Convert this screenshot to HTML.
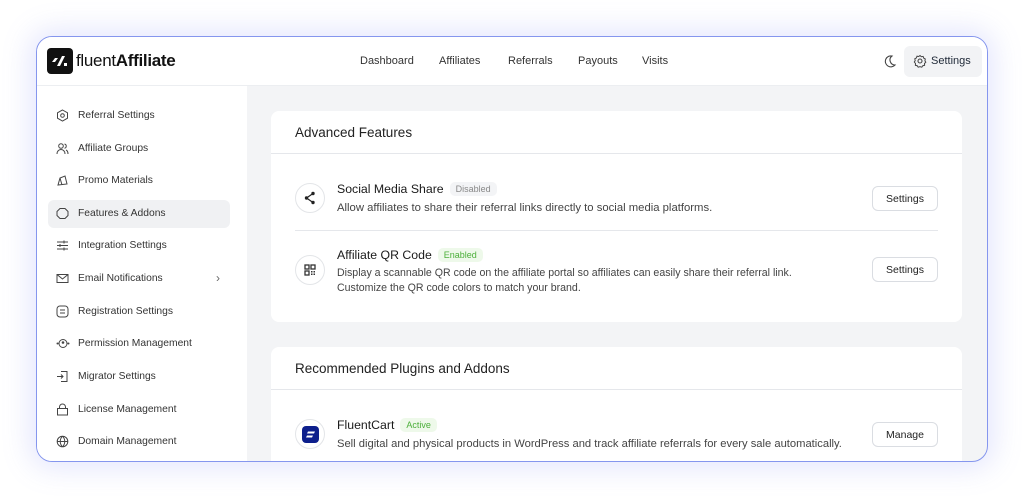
<!DOCTYPE html>
<html><head><meta charset="utf-8"><style>
*{box-sizing:border-box;margin:0;padding:0}
body{width:1024px;height:499px;background:#fff;font-family:"Liberation Sans",sans-serif;color:#1f2937;position:relative;overflow:hidden}
.frame{position:absolute;left:36px;top:36px;width:952px;height:426px;border:1.5px solid #8596ee;border-radius:16px;background:#f3f4f6;overflow:hidden;box-shadow:0 0 28px 6px rgba(130,140,245,.22)}
.hdr{position:absolute;left:0;top:0;width:100%;height:49px;background:#fff;border-bottom:1px solid #eceef1}
.logo{position:absolute;left:10px;top:11px;width:26px;height:26px;background:#111;border-radius:4px}
.brand{position:absolute;left:39px;top:14px;font-size:17px;color:#111;letter-spacing:-.3px}
.nav{position:absolute;top:18px;font-size:11px;color:#333}
.setb{position:absolute;left:867px;top:9px;width:78px;height:31px;background:#f2f3f5;border-radius:6px;font-size:11px;padding:9px 0 0 27px}
.side{position:absolute;left:0;top:49px;width:210px;height:380px;background:#fff}
.si{position:absolute;left:11px;width:182px;height:28px;border-radius:6px;font-size:10.3px;color:#333;padding:8px 0 0 30px}
.si svg{position:absolute;left:8px;top:7px}
.act{background:#f0f1f3}
.card{position:absolute;left:234px;width:691px;background:#fff;border-radius:8px}
.ct{height:43px;border-bottom:1px solid #e5e7eb;font-size:13.5px;padding:14px 0 0 24px;color:#222}
.row{position:absolute;left:24px;width:643px}
.ic{position:absolute;left:0;width:30px;height:30px;border-radius:50%;border:1px solid #e3e5e8;background:#fff}
.ti{position:absolute;left:42px;font-size:12.3px;color:#1a1a1a}
.badge{display:inline-block;font-size:9px;padding:2px 6px;border-radius:5px;margin-left:6px;vertical-align:1px}
.ds{position:absolute;left:42px;font-size:10.8px;color:#444;line-height:15px;white-space:nowrap}
.btn{position:absolute;right:0;width:66px;height:25px;border:1px solid #dadde2;border-radius:6px;font-size:10.5px;text-align:center;padding-top:6px;color:#222;background:#fff}
</style></head><body>
<div class="frame">
<div class="hdr">
 <div class="logo"><svg width="26" height="26"><path d="M8 10l3 0-3 4h-3z M15 8h3l-5 10h-3z M17 15h3v3h-3z" fill="#fff"/></svg></div>
 <div class="brand">fluent<b style="font-weight:600">Affiliate</b></div>
 <div class="nav" style="left:323px">Dashboard</div>
 <div class="nav" style="left:402px">Affiliates</div>
 <div class="nav" style="left:471px">Referrals</div>
 <div class="nav" style="left:541px">Payouts</div>
 <div class="nav" style="left:605px">Visits</div>
 <svg style="position:absolute;left:846px;top:17px" width="14" height="14" viewBox="0 0 14 14"><path d="M9 2a5.5 5.5 0 1 0 3 9A5 5 0 0 1 9 2z" fill="none" stroke="#444" stroke-width="1.1"/></svg>
 <div class="setb"><svg style="position:absolute;left:9px;top:8px" width="14" height="14" viewBox="0 0 14 14"><circle cx="7" cy="7" r="2" fill="none" stroke="#444" stroke-width="1.1"/><path d="M7 1.5l1.3 1.2 1.8-.3.6 1.7 1.6.9-.4 1.8.9 1.4-1.3 1.3.1 1.8-1.8.4-1 1.5-1.8-.6-1.8.6-1-1.5-1.8-.4.1-1.8L1.3 8l.9-1.4-.4-1.8 1.6-.9.6-1.700 1.8.3z" fill="none" stroke="#444" stroke-width="1"/></svg>Settings</div>
</div>
<div class="side">
 <div class="si" style="top:16px"><svg width="13" height="13" viewBox="0 0 13 13"><path d="M6.5 1l5 2.8v5.4l-5 2.8-5-2.8V3.8z" fill="none" stroke="#444"/><circle cx="6.5" cy="6.5" r="1.8" fill="none" stroke="#444"/></svg>Referral Settings</div>
 <div class="si" style="top:49px"><svg width="13" height="13" viewBox="0 0 13 13"><circle cx="5" cy="4" r="2.3" fill="none" stroke="#444"/><path d="M1 12c0-3 2-4.5 4-4.5s4 1.5 4 4.5M8.5 2a2.2 2.2 0 0 1 0 4.3M10 8c1.5.6 2 2 2 4" fill="none" stroke="#444"/></svg>Affiliate Groups</div>
 <div class="si" style="top:81px"><svg width="13" height="13" viewBox="0 0 13 13"><path d="M2 11l2-7 5-2 2 8z M4 4l2 7" fill="none" stroke="#444"/></svg>Promo Materials</div>
 <div class="si act" style="top:114px"><svg width="13" height="13" viewBox="0 0 13 13"><path d="M4 1.5h5l3 3v4l-3 3H4l-3-3v-4z" fill="none" stroke="#444"/></svg>Features &amp; Addons</div>
 <div class="si" style="top:146px"><svg width="13" height="13" viewBox="0 0 13 13"><path d="M1 3h11M1 6.5h11M1 10h11" stroke="#444"/><path d="M8 1.5v3M4 5v3M8 8.5v3" stroke="#444"/></svg>Integration Settings</div>
 <div class="si" style="top:179px"><svg width="13" height="13" viewBox="0 0 13 13"><rect x="1" y="2.5" width="11" height="8" fill="none" stroke="#444"/><path d="M1 2.5l5.5 4.5 5.5-4.5" fill="none" stroke="#444"/></svg>Email Notifications<span style="position:absolute;left:168px;top:6px;color:#666;font-size:12px">›</span></div>
 <div class="si" style="top:212px"><svg width="13" height="13" viewBox="0 0 13 13"><rect x="1" y="1" width="11" height="11" rx="3" fill="none" stroke="#444"/><path d="M4 5h5M4 8h5" stroke="#444"/></svg>Registration Settings</div>
 <div class="si" style="top:244px"><svg width="14" height="13" viewBox="0 0 14 13"><circle cx="7" cy="6.5" r="4" fill="none" stroke="#444"/><circle cx="7" cy="5.5" r="1.3" fill="#444"/><circle cx="1.5" cy="6.5" r="1" fill="#444"/><circle cx="12.5" cy="6.5" r="1" fill="#444"/></svg>Permission Management</div>
 <div class="si" style="top:277px"><svg width="13" height="13" viewBox="0 0 13 13"><path d="M5 1.5h6v10H5M1 6.5h6M5 4.5l2 2-2 2" fill="none" stroke="#444"/></svg>Migrator Settings</div>
 <div class="si" style="top:310px"><svg width="13" height="13" viewBox="0 0 13 13"><rect x="1.5" y="5.5" width="10" height="6.5" fill="none" stroke="#444"/><path d="M3.5 5.5V4a3 3 0 0 1 6 0v1.5" fill="none" stroke="#444"/></svg>License Management</div>
 <div class="si" style="top:342px"><svg width="13" height="13" viewBox="0 0 13 13"><circle cx="6.5" cy="6.5" r="5.3" fill="none" stroke="#444"/><path d="M1.2 6.5h10.6M6.5 1.2c-3 3-3 7.6 0 10.6M6.5 1.2c3 3 3 7.6 0 10.6" fill="none" stroke="#444"/></svg>Domain Management</div>
</div>
<div class="card" style="top:74px;height:211px">
 <div class="ct">Advanced Features</div>
 <div class="row" style="top:43px;height:77px;border-bottom:1px solid #e5e7eb">
  <div class="ic" style="top:29px"><svg width="28" height="28" viewBox="0 0 28 28"><circle cx="17" cy="9.5" r="1.7" fill="#222"/><circle cx="17" cy="18.5" r="1.7" fill="#222"/><circle cx="10.5" cy="14" r="1.7" fill="#222"/><path d="M17 9.5L10.5 14 17 18.5" fill="none" stroke="#222" stroke-width="1.2"/></svg></div>
  <div class="ti" style="top:28px">Social Media Share<span class="badge" style="background:#f3f4f6;color:#888">Disabled</span></div>
  <div class="ds" style="top:47px;font-size:11.3px">Allow affiliates to share their referral links directly to social media platforms.</div>
  <div class="btn" style="top:32px">Settings</div>
 </div>
 <div class="row" style="top:120px;height:90px">
  <div class="ic" style="top:24px"><svg width="28" height="28" viewBox="0 0 28 28"><rect x="9" y="9" width="4" height="4" fill="none" stroke="#333" stroke-width="1.3"/><rect x="15" y="9" width="4" height="4" fill="none" stroke="#333" stroke-width="1.3"/><rect x="9" y="15" width="4" height="4" fill="none" stroke="#333" stroke-width="1.3"/><path d="M15 15h1.5v1.5H15zM17.5 17.5H19V19h-1.5zM17.5 15H19v1.5h-1.5zM15 17.5h1.5V19H15z" fill="#333"/></svg></div>
  <div class="ti" style="top:17px">Affiliate QR Code<span class="badge" style="background:#eef9ea;color:#4caf3a">Enabled</span></div>
  <div class="ds" style="top:35px;font-size:10.6px">Display a scannable QR code on the affiliate portal so affiliates can easily share their referral link.<br>Customize the QR code colors to match your brand.</div>
  <div class="btn" style="top:26px">Settings</div>
 </div>
</div>
<div class="card" style="top:310px;height:130px">
 <div class="ct">Recommended Plugins and Addons</div>
 <div class="row" style="top:43px;height:80px">
  <div class="ic" style="top:29px"><div style="position:absolute;left:6px;top:6px;width:17px;height:17px;border-radius:4px;background:#0d1f8c"><svg width="17" height="17"><path d="M6 5.5h7l-1 2H5zM5 9.5h6l-1 2H4z" fill="#fff"/></svg></div></div>
  <div class="ti" style="top:28px">FluentCart<span class="badge" style="background:#eef9ea;color:#4caf3a">Active</span></div>
  <div class="ds" style="top:47px;font-size:11.2px">Sell digital and physical products in WordPress and track affiliate referrals for every sale automatically.</div>
  <div class="btn" style="top:32px">Manage</div>
 </div>
</div>
</div>
</body></html>
